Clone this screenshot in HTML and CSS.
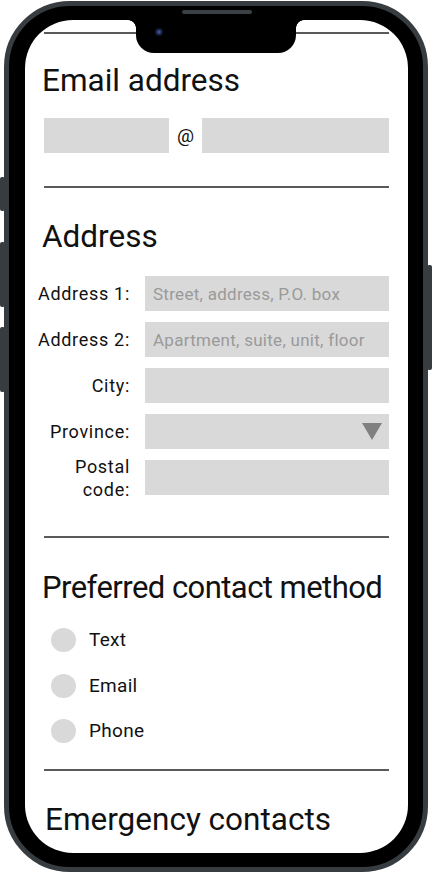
FILE: index.html
```html
<!DOCTYPE html>
<html lang="en">
<head>
<meta charset="utf-8">
<title>Contact form</title>
<link rel="stylesheet" href="styles.css">
</head>
<body>
<div class="phone">
  <span class="btn btn-l1"></span>
  <span class="btn btn-l2"></span>
  <span class="btn btn-l3"></span>
  <span class="btn btn-r1"></span>
  <span class="speaker"></span>
  <div class="screen">
    <div class="notch"><span class="camera"></span></div>
    <hr class="rule rule-top">
    <h2 class="heading heading-email">Email address</h2>
    <div class="email-row">
      <div class="field field-user"></div>
      <span class="at">@</span>
      <div class="field field-domain"></div>
    </div>
    <hr class="rule">
    <h2 class="heading heading-addr">Address</h2>
    <div class="addr-grid">
      <span class="label">Address 1:</span>
      <div class="field"><span class="ph">Street, address, P.O. box</span></div>
      <span class="label">Address 2:</span>
      <div class="field"><span class="ph">Apartment, suite, unit, floor</span></div>
      <span class="label">City:</span>
      <div class="field"></div>
      <span class="label">Province:</span>
      <div class="field field-select"><span class="caret"></span></div>
      <span class="label label-two">Postal<br>code:</span>
      <div class="field"></div>
    </div>
    <hr class="rule">
    <h2 class="heading heading-pref">Preferred contact method</h2>
    <div class="radios">
      <div class="radio"><span class="dot"></span><span class="rtext">Text</span></div>
      <div class="radio"><span class="dot"></span><span class="rtext">Email</span></div>
      <div class="radio"><span class="dot"></span><span class="rtext">Phone</span></div>
    </div>
    <hr class="rule">
    <h2 class="heading heading-last">Emergency contacts</h2>
  </div>
</div>
</body>
</html>
```

FILE: styles.css
```css
* { box-sizing: border-box; }
html, body { margin: 0; padding: 0; background: #fff; }
body { font-family: Roboto, "Noto Sans", sans-serif; color: #111; }

.phone {
  position: relative;
  width: 424px;
  height: 871px;
  margin: 1px 0 0 4px;
  border: 5px solid #363c3f;
  border-radius: 66px;
  background: #000;
  padding: 14px 15px 14px 16px;
}
.btn {
  position: absolute;
  width: 5px;
  background: #363c3f;
  border-radius: 2px;
}
.btn-l1 { left: -9px; top: 171px; height: 34px; }
.btn-l2 { left: -9px; top: 236px; height: 65px; }
.btn-l3 { left: -9px; top: 321px; height: 65px; }
.btn-r1 { right: -9px; top: 259px; height: 105px; }
.speaker {
  position: absolute;
  left: 173px;
  top: 4px;
  width: 70px;
  height: 4px;
  border-radius: 2px;
  background: #3a4043;
}

.screen {
  position: relative;
  height: 100%;
  background: #fff;
  border-radius: 48px;
  overflow: hidden;
  padding: 12px 19px 0;
}
.notch {
  position: absolute;
  left: 111px;
  top: 0;
  width: 160px;
  height: 33px;
  background: #000;
  border-radius: 0 0 18px 18px;
  z-index: 2;
}
.notch::before, .notch::after {
  content: "";
  position: absolute;
  top: 0;
  width: 8px;
  height: 8px;
}
.notch::before { left: -8px; background: radial-gradient(circle at 0 100%, transparent 7.5px, #000 8px); }
.notch::after { right: -8px; background: radial-gradient(circle at 100% 100%, transparent 7.5px, #000 8px); }
.camera {
  position: absolute;
  left: 19px;
  top: 8px;
  width: 8px;
  height: 8px;
  border-radius: 50%;
  background: radial-gradient(circle, #3b4a8a 0 1.5px, #141a33 2.5px);
}

.rule {
  margin: 0;
  border: 0;
  height: 2px;
  background: #5a5a5a;
}
.heading {
  margin: 31px -2px 0;
  font-size: 31.5px;
  font-weight: 400;
  line-height: 36px;
  color: #111;
}
.heading-email { margin-top: 29px; }
.heading-addr { margin-top: 31px; }
.heading-pref { margin-top: 32px; font-size: 31px; letter-spacing: -0.55px; }
.heading-last { margin-left: 1px; }

.email-row {
  display: flex;
  align-items: center;
  gap: 8px;
  margin: 19px 0 33px;
}
.field {
  height: 35px;
  background: #d9d9d9;
  display: flex;
  align-items: center;
  padding-left: 8px;
}
.field-user { width: 125px; }
.field-domain { flex: 1; }
.at { font-size: 19px; line-height: 20px; }

.addr-grid {
  display: grid;
  grid-template-columns: 93px 1fr;
  column-gap: 15px;
  row-gap: 11px;
  align-items: center;
  margin: 21px 0 41px -7px;
}
.label {
  text-align: right;
  font-size: 18px;
  letter-spacing: 0.7px;
  line-height: 23px;
  white-space: nowrap;
}
.label-two { margin: -5.5px 0; }
.ph { font-size: 17px; letter-spacing: 0.28px; color: #9a9a9a; }
.field-select { justify-content: flex-end; padding-right: 7px; }
.caret {
  width: 0;
  height: 0;
  border-left: 10px solid transparent;
  border-right: 10px solid transparent;
  border-top: 17px solid #808080;
}

.radios {
  display: flex;
  flex-direction: column;
  gap: 21.5px;
  margin: 22px 0 26px 7px;
}
.radio {
  display: flex;
  align-items: center;
  gap: 13px;
}
.dot {
  width: 25px;
  height: 24px;
  border-radius: 50%;
  background: #d9d9d9;
}
.rtext { font-size: 19px; letter-spacing: 0.3px; line-height: 24px; }
```
